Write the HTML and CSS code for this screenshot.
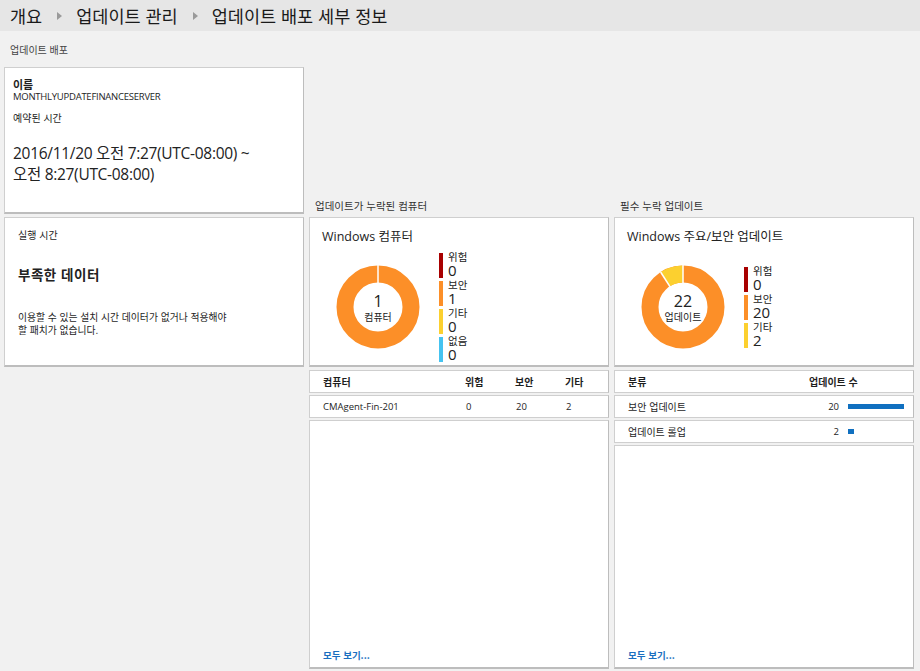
FILE: index.html
```html
<!DOCTYPE html>
<html lang="ko">
<head>
<meta charset="utf-8">
<link rel="stylesheet" href="styles.css">
</head>
<body>
<header class="crumbs">
  <span>개요</span>
  <span class="sep"></span>
  <span>업데이트 관리</span>
  <span class="sep"></span>
  <span>업데이트 배포 세부 정보</span>
</header>
<main class="board">
  <div class="sect-label c1 r1">업데이트 배포</div>

  <section class="card info c1 r2">
    <div class="strong">이름</div>
    <div class="name">MONTHLYUPDATEFINANCESERVER</div>
    <div class="sched-label">예약된 시간</div>
    <div class="sched">2016/11/20 오전 7:27(UTC-08:00) ~<br>오전 8:27(UTC-08:00)</div>
  </section>

  <div class="sect-label c2 r2 bottom">업데이트가 누락된 컴퓨터</div>
  <div class="sect-label c3 r2 bottom">필수 누락 업데이트</div>

  <section class="card runtime c1 r3">
    <div class="rt-label">실행 시간</div>
    <div class="rt-title">부족한 데이터</div>
    <p class="rt-text">이용할 수 있는 설치 시간 데이터가 없거나 적용해야<br>할 패치가 없습니다.</p>
  </section>

  <section class="card chart c2 r3">
    <div class="chart-title">Windows 컴퓨터</div>
    <div class="chart-body">
      <div class="donut">
        <svg width="84" height="84" viewBox="0 0 84 84">
          <circle cx="42" cy="42" r="33" fill="none" stroke="#fc8f28" stroke-width="17"/>
          <line x1="42" y1="0" x2="42" y2="26" stroke="#fff" stroke-width="1.5"/>
        </svg>
        <div class="donut-center"><div class="big">1</div><div class="small">컴퓨터</div></div>
      </div>
      <ul class="legend">
        <li><i class="bar red"></i><div><div class="lg-l">위험</div><div class="lg-v">0</div></div></li>
        <li><i class="bar orange"></i><div><div class="lg-l">보안</div><div class="lg-v">1</div></div></li>
        <li><i class="bar yellow"></i><div><div class="lg-l">기타</div><div class="lg-v">0</div></div></li>
        <li><i class="bar cyan"></i><div><div class="lg-l">없음</div><div class="lg-v">0</div></div></li>
      </ul>
    </div>
  </section>

  <section class="card chart c3 r3">
    <div class="chart-title">Windows 주요/보안 업데이트</div>
    <div class="chart-body">
      <div class="donut">
        <svg width="84" height="84" viewBox="0 0 84 84">
          <circle cx="42" cy="42" r="33" fill="none" stroke="#fc8f28" stroke-width="17"/>
          <path d="M42 9 A33 33 0 0 0 24.2 14.2" fill="none" stroke="#fcd02f" stroke-width="17"/>
          <line x1="42" y1="0" x2="42" y2="26" stroke="#fff" stroke-width="1.5"/>
          <line x1="19.6" y1="7" x2="33.3" y2="28.4" stroke="#fff" stroke-width="1.5"/>
        </svg>
        <div class="donut-center"><div class="big">22</div><div class="small">업데이트</div></div>
      </div>
      <ul class="legend">
        <li><i class="bar red"></i><div><div class="lg-l">위험</div><div class="lg-v">0</div></div></li>
        <li><i class="bar orange"></i><div><div class="lg-l">보안</div><div class="lg-v">20</div></div></li>
        <li><i class="bar yellow"></i><div><div class="lg-l">기타</div><div class="lg-v">2</div></div></li>
      </ul>
    </div>
  </section>

  <div class="stack c2 r4">
    <div class="card row tgrid head"><span>컴퓨터</span><span>위험</span><span>보안</span><span>기타</span></div>
    <div class="card row tgrid"><span>CMAgent-Fin-201</span><span class="num">0</span><span class="num">20</span><span class="num">2</span></div>
    <div class="card filler"><a class="more" href="#">모두 보기...</a></div>
  </div>

  <div class="stack c3 r4">
    <div class="card row ugrid head"><span class="nm">분류</span><span class="hcount">업데이트 수</span></div>
    <div class="card row ugrid"><span class="nm">보안 업데이트</span><span class="cnt">20</span><span class="track"><span class="fill" style="width:56px"></span></span></div>
    <div class="card row ugrid"><span class="nm">업데이트 롤업</span><span class="cnt">2</span><span class="track"><span class="fill" style="width:6px"></span></span></div>
    <div class="card filler"><a class="more" href="#">모두 보기...</a></div>
  </div>
</main>
</body>
</html>
```

FILE: styles.css
```css
* { box-sizing: border-box; }
html, body { margin: 0; padding: 0; }
body {
  width: 920px;
  height: 671px;
  overflow: hidden;
  background: #f1f1f1;
  font-family: "Open Sans", "Noto Sans CJK KR", sans-serif;
  color: #1e1e1e;
}
.crumbs {
  height: 31px;
  background: #e6e6e6;
  display: flex;
  align-items: center;
  padding-left: 10px;
  font-family: "Noto Sans CJK KR", sans-serif;
  font-size: 17.5px;
  color: #1a1a1a;
}
.crumbs .sep {
  width: 0; height: 0;
  border-top: 4px solid transparent;
  border-bottom: 4px solid transparent;
  border-left: 5px solid #9a9a9a;
  margin: 1px 14px 0 15px;
}
.board {
  display: grid;
  grid-template-columns: 300px 300px 300px;
  grid-template-rows: 33px 147px 150px 299px;
  column-gap: 5px;
  row-gap: 3px;
  padding-left: 4px;
}
.c1 { grid-column: 1; } .c2 { grid-column: 2; } .c3 { grid-column: 3; }
.r1 { grid-row: 1; } .r2 { grid-row: 2; } .r3 { grid-row: 3; } .r4 { grid-row: 4; }

.sect-label {
  font-family: "Noto Sans CJK KR", sans-serif;
  font-size: 10px;
  color: #444;
  padding-left: 6px;
  align-self: end;
  padding-bottom: 7px;
}
.sect-label.bottom { padding-bottom: 1px; font-size: 10.5px; color: #333; }

.card {
  background: #fff;
  border: 1px solid #cfcfcf;
  border-bottom: 2px solid #bdbdbd;
  border-right-color: #bdbdbd;
}

.info { padding: 9px 8px 0 8px; }
.info .strong { font-family: "Noto Sans CJK KR", sans-serif; font-weight: 700; font-size: 11px; line-height: 14px; }
.info .name { font-size: 9.5px; line-height: 12px; letter-spacing: -0.25px; }
.info .sched-label { font-family: "Noto Sans CJK KR", sans-serif; font-size: 10px; margin-top: 8px; line-height: 14px; }
.info .sched { font-size: 15.5px; line-height: 21px; margin-top: 18px; letter-spacing: -0.3px; color: #222; }

.runtime { padding: 10px 13px 0 13px; font-family: "Noto Sans CJK KR", sans-serif; }
.rt-label { font-size: 10px; line-height: 14px; }
.rt-title { font-size: 13.5px; font-weight: 700; margin-top: 23px; line-height: 18px; color: #222; letter-spacing: 0.5px; }
.rt-text { font-size: 9.8px; line-height: 12.5px; margin: 28px 0 0 0; }

.chart { padding: 10px 0 0 12px; }
.chart-title { font-family: "Open Sans", "Noto Sans CJK KR", sans-serif; font-size: 12.5px; line-height: 18px; color: #222; }
.chart-body { display: flex; align-items: center; height: 116px; }
.donut { position: relative; width: 84px; height: 84px; margin-left: 14px; margin-top: 6px; }
.donut svg { display: block; }
.donut-center {
  position: absolute; inset: 0;
  display: flex; flex-direction: column; align-items: center; justify-content: center;
  padding-top: 2px;
}
.donut-center .big { font-size: 16px; line-height: 17px; color: #222; }
.donut-center .small { font-family: "Noto Sans CJK KR", sans-serif; font-size: 10px; line-height: 13px; color: #222; }

.legend { list-style: none; margin: 6px 0 0 19px; padding: 0; display: flex; flex-direction: column; gap: 3px; }
.legend li { display: flex; height: 25px; gap: 5px; }
.legend .bar { width: 4px; height: 25px; display: block; flex: none; }
.bar.red { background: #a80000; }
.bar.orange { background: #fc8f28; }
.bar.yellow { background: #fcd02f; }
.bar.cyan { background: #45c3f0; }
.lg-l { font-family: "Noto Sans CJK KR", sans-serif; font-size: 10.5px; line-height: 11px; margin-top: -2px; color: #222; }
.lg-v { font-size: 15px; line-height: 15px; margin-top: 1px; color: #222; }

.stack { display: flex; flex-direction: column; gap: 2px; }
.row { height: 23px; display: grid; align-items: center; padding-left: 13px; font-size: 9.5px; border-bottom-width: 1px; border-bottom-color: #cfcfcf; }
.row.head { font-family: "Noto Sans CJK KR", sans-serif; font-weight: 700; font-size: 10px; }
.tgrid { grid-template-columns: 142px 50px 50px 1fr; }
.tgrid .num { padding-left: 1px; }
.ugrid { grid-template-columns: 1fr 30px 65px; column-gap: 9px; font-family: "Noto Sans CJK KR", sans-serif; }
.ugrid .nm { font-size: 10px; }
.ugrid .hcount { grid-column: 2 / 4; margin-left: 0; }
.ugrid .cnt { text-align: right; font-family: "Open Sans", sans-serif; font-size: 9.5px; }
.track { display: block; height: 5px; }
.fill { display: block; height: 5px; background: #1070c0; }
.filler { flex: 1; position: relative; }
.more {
  position: absolute; left: 13px; bottom: 5px;
  font-family: "Noto Sans CJK KR", sans-serif;
  font-size: 9.5px; font-weight: 700; color: #1a6fc0; text-decoration: none;
}
```
